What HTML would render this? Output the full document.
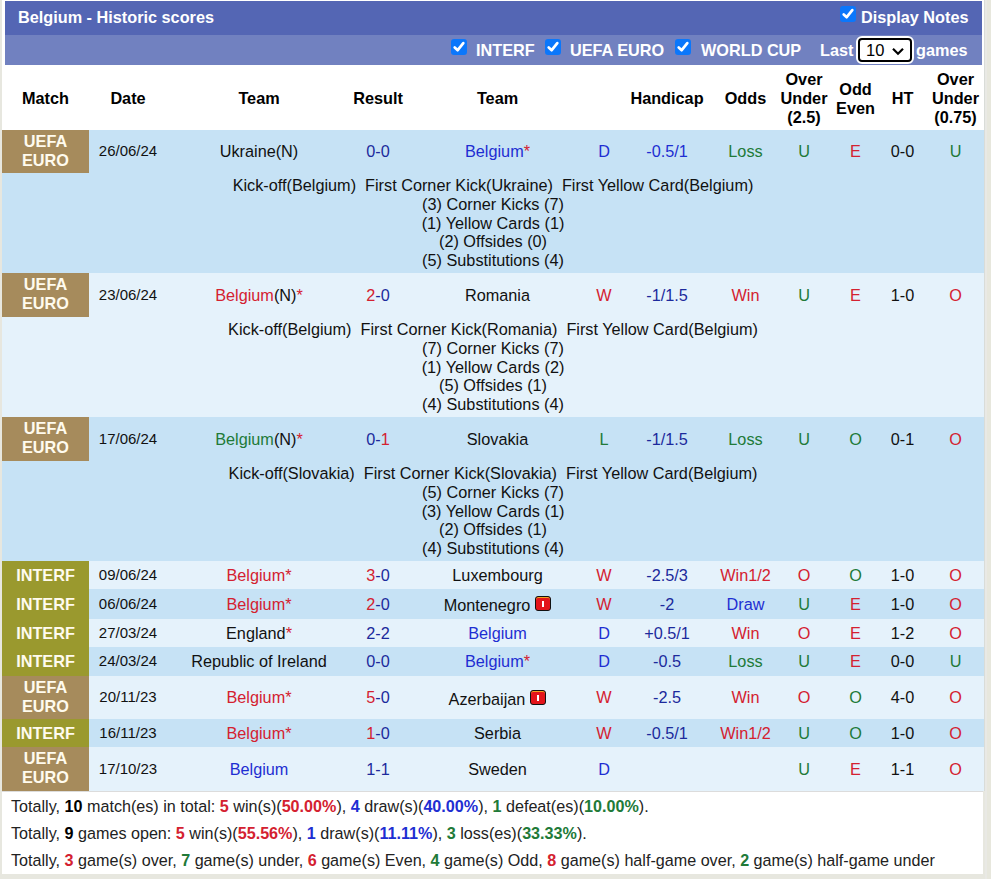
<!DOCTYPE html>
<html><head><meta charset="utf-8">
<style>
*{box-sizing:border-box}
html,body{margin:0;padding:0}
body{width:991px;height:879px;overflow:hidden;background:#e7e7df;font-family:"Liberation Sans",sans-serif;font-size:16.25px;position:relative}
#wrap{position:absolute;left:2px;top:0;width:982px;height:791px;background:#fff}
#t1{position:absolute;left:5px;top:1px;width:977px;height:34px;background:#5466b4}
#t2{position:absolute;left:5px;top:35px;width:977px;height:30px;background:#7181c0}
.wt{position:absolute;color:#fff;font-weight:bold;white-space:nowrap;line-height:19px}
.cb{position:absolute;width:16px;height:16px;border-radius:3px;background:#0b77fb}
.cb svg{position:absolute;left:0;top:0}
#sel{position:absolute;left:856px;top:36px;width:58px;height:28px;border:2px solid #fff;border-radius:6px;background:#fff}
#sel .in{position:absolute;left:0;top:0;width:54px;height:24px;border:2px solid #000;border-radius:4px;background:#fff}
table{position:absolute;left:2px;top:65px;width:982px;border-collapse:collapse;table-layout:fixed;line-height:18.75px}
td,th{padding:0;text-align:center;vertical-align:middle;white-space:nowrap;overflow:visible}
th{font-weight:bold;color:#000;background:#fff;padding-top:2px}
tr.L td{background:#e5f2fb}
tr.D td{background:#c6e2f5}
td.ue{background:#a68b5c !important;color:#fffbee;font-weight:bold;padding-bottom:2px}
td.it{background:#9a992e !important;color:#fffbee;font-weight:bold}
.r{color:#d42130}.b{color:#1e2ed2}.n{color:#1c2a9c}.g{color:#217a38}.k{color:#111}
td.note{line-height:18.75px;color:#111}
td.dt{font-size:15px}
#sum{position:absolute;left:2px;top:791px;width:981px;height:83px;background:#fff;border-top:1px solid #dcdcdc}
#sum div{position:absolute;left:9px;white-space:nowrap;color:#222;line-height:19px;font-size:16.15px}
#sum b{font-weight:bold}
.rc{display:inline-block;position:relative;width:16px;height:15px;vertical-align:0;margin-left:5px;border:1.3px solid #111;border-radius:3px;background:#e3141a;box-shadow:inset 0 1px 0 #f5a020}
.rc:after{content:"";position:absolute;left:5.5px;top:3.5px;width:2.6px;height:6.5px;background:#fff}
</style></head><body>
<div id="wrap"></div>
<div style="position:absolute;left:984px;top:0;width:1px;height:791px;background:#d9dcd8"></div><div style="position:absolute;left:985px;top:0;width:2px;height:879px;background:#e9e9e5"></div><div style="position:absolute;left:987px;top:0;width:4px;height:879px;background:#e7e7dd"></div>
<div id="t1"></div>
<div id="t2"></div>
<div class="wt" style="left:18px;top:8px">Belgium - Historic scores</div>
<div class="cb" style="left:840px;top:6px"><svg width="16" height="16"><path d="M3.7 8.4 L6.7 11.2 L12.3 4.1" stroke="#fff" stroke-width="2.7" fill="none" stroke-linecap="round" stroke-linejoin="round"/></svg></div>
<div class="wt" style="left:861px;top:8px">Display Notes</div>

<div class="cb" style="left:451px;top:39px"><svg width="16" height="16"><path d="M3.7 8.4 L6.7 11.2 L12.3 4.1" stroke="#fff" stroke-width="2.7" fill="none" stroke-linecap="round" stroke-linejoin="round"/></svg></div>
<div class="wt" style="left:476px;top:41px">INTERF</div>
<div class="cb" style="left:545px;top:39px"><svg width="16" height="16"><path d="M3.7 8.4 L6.7 11.2 L12.3 4.1" stroke="#fff" stroke-width="2.7" fill="none" stroke-linecap="round" stroke-linejoin="round"/></svg></div>
<div class="wt" style="left:570px;top:41px">UEFA EURO</div>
<div class="cb" style="left:675px;top:39px"><svg width="16" height="16"><path d="M3.7 8.4 L6.7 11.2 L12.3 4.1" stroke="#fff" stroke-width="2.7" fill="none" stroke-linecap="round" stroke-linejoin="round"/></svg></div>
<div class="wt" style="left:701px;top:41px">WORLD CUP</div>
<div class="wt" style="left:820px;top:41px">Last</div>
<div id="sel"><div class="in"><span style="position:absolute;left:6px;top:1px;color:#000;font-size:16.5px;line-height:19px">10</span><svg style="position:absolute;left:31px;top:7px" width="14" height="9"><path d="M2 1.8 L7 6.8 L12 1.8" stroke="#000" stroke-width="2.2" fill="none"/></svg></div></div>
<div class="wt" style="left:916px;top:41px">games</div>

<table>
<colgroup><col style="width:87px"><col style="width:78px"><col style="width:184px"><col style="width:54px"><col style="width:185px"><col style="width:28px"><col style="width:98px"><col style="width:59px"><col style="width:58px"><col style="width:45px"><col style="width:49px"><col style="width:57px"></colgroup>
<tr style="height:65px"><th>Match</th><th>Date</th><th>Team</th><th>Result</th><th>Team</th><th></th><th>Handicap</th><th>Odds</th><th>Over<br>Under<br>(2.5)</th><th>Odd<br>Even</th><th>HT</th><th>Over<br>Under<br>(0.75)</th></tr>

<tr class="D" style="height:43px"><td class="ue">UEFA<br>EURO</td><td class="k dt">26/06/24</td><td class="k">Ukraine(N)</td><td class="n">0-0</td><td><span class="b">Belgium</span><span class="r">*</span></td><td class="b">D</td><td class="b">-0.5/1</td><td class="g">Loss</td><td class="g">U</td><td class="r">E</td><td class="k">0-0</td><td class="g">U</td></tr>
<tr class="D" style="height:100px"><td class="note" colspan="12">Kick-off(Belgium)&nbsp; First Corner Kick(Ukraine)&nbsp; First Yellow Card(Belgium)<br>(3) Corner Kicks (7)<br>(1) Yellow Cards (1)<br>(2) Offsides (0)<br>(5) Substitutions (4)</td></tr>

<tr class="L" style="height:44px"><td class="ue">UEFA<br>EURO</td><td class="k dt">23/06/24</td><td><span class="r">Belgium</span><span class="k">(N)</span><span class="r">*</span></td><td><span class="r">2</span><span class="n">-0</span></td><td class="k">Romania</td><td class="r">W</td><td class="n">-1/1.5</td><td class="r">Win</td><td class="g">U</td><td class="r">E</td><td class="k">1-0</td><td class="r">O</td></tr>
<tr class="L" style="height:100px"><td class="note" colspan="12">Kick-off(Belgium)&nbsp; First Corner Kick(Romania)&nbsp; First Yellow Card(Belgium)<br>(7) Corner Kicks (7)<br>(1) Yellow Cards (2)<br>(5) Offsides (1)<br>(4) Substitutions (4)</td></tr>

<tr class="D" style="height:44px"><td class="ue">UEFA<br>EURO</td><td class="k dt">17/06/24</td><td><span class="g">Belgium</span><span class="k">(N)</span><span class="r">*</span></td><td><span class="n">0-</span><span class="r">1</span></td><td class="k">Slovakia</td><td class="g">L</td><td class="n">-1/1.5</td><td class="g">Loss</td><td class="g">U</td><td class="g">O</td><td class="k">0-1</td><td class="r">O</td></tr>
<tr class="D" style="height:100px"><td class="note" colspan="12">Kick-off(Slovakia)&nbsp; First Corner Kick(Slovakia)&nbsp; First Yellow Card(Belgium)<br>(5) Corner Kicks (7)<br>(3) Yellow Cards (1)<br>(2) Offsides (1)<br>(4) Substitutions (4)</td></tr>

<tr class="L" style="height:28px"><td class="it">INTERF</td><td class="k dt">09/06/24</td><td class="r">Belgium*</td><td><span class="r">3</span><span class="n">-0</span></td><td class="k">Luxembourg</td><td class="r">W</td><td class="n">-2.5/3</td><td class="r">Win1/2</td><td class="r">O</td><td class="g">O</td><td class="k">1-0</td><td class="r">O</td></tr>
<tr class="D" style="height:30px"><td class="it">INTERF</td><td class="k dt">06/06/24</td><td class="r">Belgium*</td><td><span class="r">2</span><span class="n">-0</span></td><td class="k" style="padding-top:3px">Montenegro<span class="rc"></span></td><td class="r">W</td><td class="n">-2</td><td class="b">Draw</td><td class="g">U</td><td class="r">E</td><td class="k">1-0</td><td class="r">O</td></tr>
<tr class="L" style="height:28px"><td class="it">INTERF</td><td class="k dt">27/03/24</td><td><span class="k">England</span><span class="r">*</span></td><td class="n">2-2</td><td class="b">Belgium</td><td class="b">D</td><td class="n">+0.5/1</td><td class="r">Win</td><td class="r">O</td><td class="r">E</td><td class="k">1-2</td><td class="r">O</td></tr>
<tr class="D" style="height:29px"><td class="it">INTERF</td><td class="k dt">24/03/24</td><td class="k">Republic of Ireland</td><td class="n">0-0</td><td><span class="b">Belgium</span><span class="r">*</span></td><td class="b">D</td><td class="n">-0.5</td><td class="g">Loss</td><td class="g">U</td><td class="r">E</td><td class="k">0-0</td><td class="g">U</td></tr>
<tr class="L" style="height:43px"><td class="ue">UEFA<br>EURO</td><td class="k dt">20/11/23</td><td class="r">Belgium*</td><td><span class="r">5</span><span class="n">-0</span></td><td class="k" style="padding-top:4px">Azerbaijan<span class="rc"></span></td><td class="r">W</td><td class="n">-2.5</td><td class="r">Win</td><td class="r">O</td><td class="g">O</td><td class="k">4-0</td><td class="r">O</td></tr>
<tr class="D" style="height:28px"><td class="it">INTERF</td><td class="k dt">16/11/23</td><td class="r">Belgium*</td><td><span class="r">1</span><span class="n">-0</span></td><td class="k">Serbia</td><td class="r">W</td><td class="n">-0.5/1</td><td class="r">Win1/2</td><td class="g">U</td><td class="g">O</td><td class="k">1-0</td><td class="r">O</td></tr>
<tr class="L" style="height:44px"><td class="ue">UEFA<br>EURO</td><td class="k dt">17/10/23</td><td class="b">Belgium</td><td class="n">1-1</td><td class="k">Sweden</td><td class="b">D</td><td></td><td></td><td class="g">U</td><td class="r">E</td><td class="k">1-1</td><td class="r">O</td></tr>
</table>

<div id="sum">
<div style="top:5px">Totally, <b style="color:#000">10</b> match(es) in total: <b class="r">5</b> win(s)(<b class="r">50.00%</b>), <b class="b">4</b> draw(s)(<b class="b">40.00%</b>), <b class="g">1</b> defeat(es)(<b class="g">10.00%</b>).</div>
<div style="top:32px">Totally, <b style="color:#000">9</b> games open: <b class="r">5</b> win(s)(<b class="r">55.56%</b>), <b class="b">1</b> draw(s)(<b class="b">11.11%</b>), <b class="g">3</b> loss(es)(<b class="g">33.33%</b>).</div>
<div style="top:59px">Totally, <b class="r">3</b> game(s) over, <b class="g">7</b> game(s) under, <b class="r">6</b> game(s) Even, <b class="g">4</b> game(s) Odd, <b class="r">8</b> game(s) half-game over, <b class="g">2</b> game(s) half-game under</div>
</div>
</body></html>
